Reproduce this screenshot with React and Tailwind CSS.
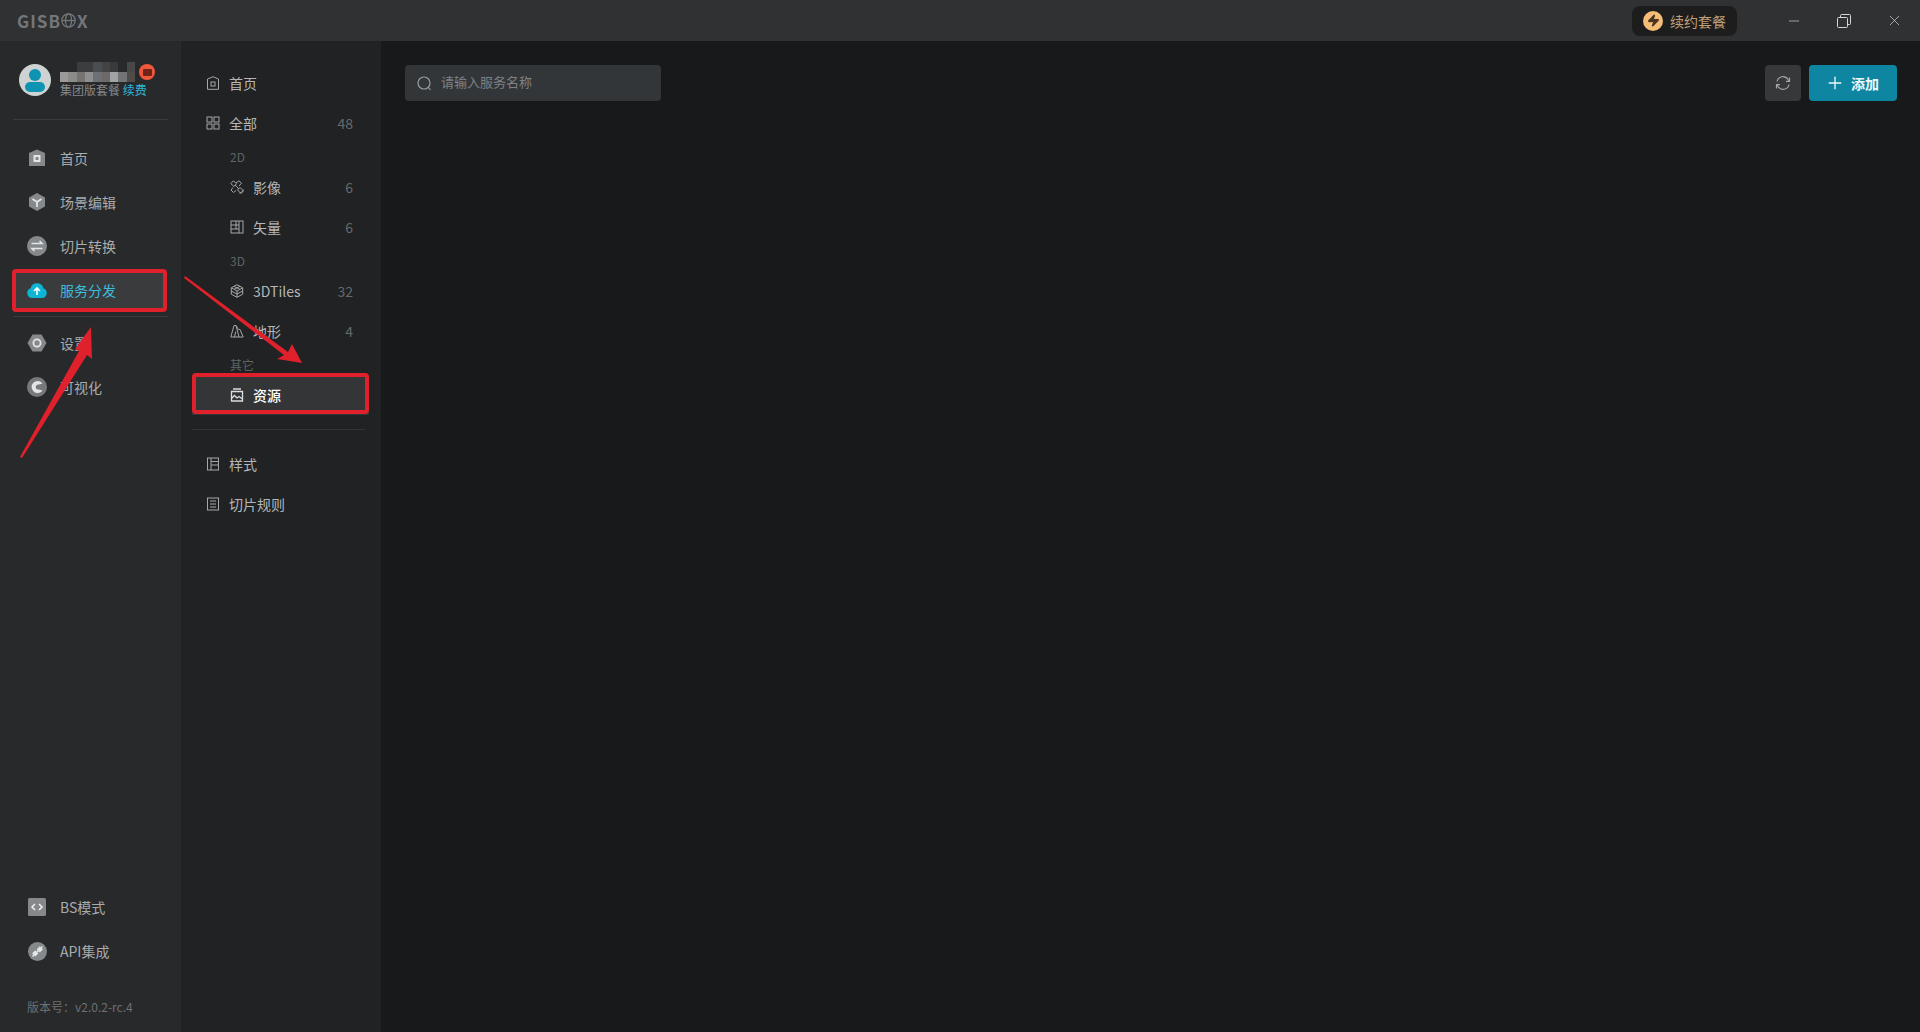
import { Plus, X, Minus, Zap } from "lucide-react";

const FONT = { fontFamily: '"Noto Sans CJK SC", "Noto Sans", sans-serif' };

// 左侧主导航图标
function IconHome() {
  return (
    <svg width="18" height="18" viewBox="0 0 18 18">
      <path d="M9 0.5 L17 4 V17 H1 V4 Z" fill="#85898b" />
      <rect x="5.5" y="6" width="7" height="7" fill="#e4e5e6" />
      <rect x="7.5" y="8" width="3" height="3" fill="#85898b" />
    </svg>
  );
}

function IconScene() {
  return (
    <svg width="18" height="18" viewBox="0 0 18 18">
      <path d="M9 0 L17 4.5 V13.5 L9 18 L1 13.5 V4.5 Z" fill="#85898b" />
      <path d="M4.5 6 L9 9 L13.5 6 M9 9 V14" stroke="#e4e5e6" strokeWidth="1.8" fill="none" />
    </svg>
  );
}

function IconSwitch() {
  return (
    <svg width="20" height="20" viewBox="0 0 20 20">
      <circle cx="10" cy="10" r="10" fill="#85898b" />
      <path d="M4.5 7.5 H15 L12.5 5 M15.5 12.5 H5 L7.5 15" stroke="#e4e5e6" strokeWidth="1.6" fill="none" />
    </svg>
  );
}

function IconCloud() {
  return (
    <svg width="20" height="18" viewBox="0 0 20 18">
      <path d="M5 17 A5 5 0 0 1 3.6 7.3 A6.6 6.6 0 0 1 16.4 7.3 A5 5 0 0 1 15 17 Z" fill="#0db4d4" />
      <path d="M10 14 V7.5 M7 10 L10 7 L13 10" stroke="#fff" strokeWidth="1.6" fill="none" />
    </svg>
  );
}

function IconGear() {
  return (
    <svg width="20" height="18" viewBox="0 0 20 18">
      <path d="M5.5 0.5 H14.5 L19.5 9 L14.5 17.5 H5.5 L0.5 9 Z" fill="#85898b" />
      <circle cx="10" cy="9" r="3.6" fill="none" stroke="#e4e5e6" strokeWidth="1.8" />
    </svg>
  );
}

function IconVisual() {
  return (
    <svg width="20" height="20" viewBox="0 0 20 20">
      <circle cx="10" cy="10" r="10" fill="#77797b" />
      <path d="M15.5 6.5 A6 6 0 1 0 15.5 13.5 L12 12.5 A2.6 2.6 0 1 1 12 7.5 Z" fill="#e4e5e6" />
    </svg>
  );
}

function IconCode() {
  return (
    <svg width="18" height="18" viewBox="0 0 18 18">
      <rect width="18" height="18" rx="1.5" fill="#85898b" />
      <path d="M7 6 L4 9 L7 12 M11 6 L14 9 L11 12" stroke="#f0f0f0" strokeWidth="1.5" fill="none" />
    </svg>
  );
}

function IconApi() {
  return (
    <svg width="19" height="19" viewBox="0 0 19 19">
      <circle cx="9.5" cy="9.5" r="9.5" fill="#85898b" />
      <path d="M4.5 14.5 L14.5 4.5" stroke="#e4e5e6" strokeWidth="1.5" />
      <rect x="5" y="9.2" width="4.4" height="4.4" transform="rotate(45 7.2 11.4)" fill="#e4e5e6" />
      <rect x="9.6" y="5.2" width="4.4" height="4.4" transform="rotate(45 11.8 7.4)" fill="#e4e5e6" />
    </svg>
  );
}

// 二级导航线框图标
function Line({ children }) {
  return (
    <svg width="14" height="14" viewBox="0 0 14 14" fill="none" stroke="currentColor" strokeWidth="1" className="shrink-0">
      {children}
    </svg>
  );
}

const subIcons = {
  home: (
    <Line>
      <path d="M7 0.7 L12.5 3 V13.3 H1.5 V3 Z" />
      <rect x="5" y="6" width="4" height="4" />
    </Line>
  ),
  grid: (
    <Line>
      <rect x="1" y="1" width="5" height="5" />
      <rect x="8" y="1" width="5" height="5" />
      <rect x="1" y="8" width="5" height="5" />
      <rect x="8" y="8" width="5" height="5" />
    </Line>
  ),
  satellite: (
    <Line>
      <path d="M5 5 L9 9 M3.5 0.8 L0.8 3.5 L3.8 6.5 L6.5 3.8 Z M10 7.5 L7.5 10 L10.5 13 L13 10.5 Z M6 3 L9 0.8 L11.5 3.2 L9 6 M3 7.5 L1 10 L3.5 12.5 L6 10.5 M9.5 13.2 C12 13.4 13.4 12 13.2 9.5" />
    </Line>
  ),
  vector: (
    <Line>
      <rect x="1" y="1" width="12" height="12" />
      <path d="M1 5 H9 M6 1 V9 M9 1 V13 M1 9 H9" />
    </Line>
  ),
  cube: (
    <Line>
      <path d="M7 0.7 L12.7 3.8 V10.2 L7 13.3 L1.3 10.2 V3.8 Z M1.3 3.8 L7 7 L12.7 3.8 M7 7 V13.3 M4 2.3 L10 5.4 M10 2.3 L4 5.4 M1.3 7 L7 10 L12.7 7" />
    </Line>
  ),
  terrain: (
    <Line>
      <path d="M0.8 13 L4 1.5 H6 L9 13 M6 1.5 L8.5 5.5 H10 L13.2 13 H0.8 M4.5 13 L5.8 7.5" />
    </Line>
  ),
  asset: (
    <Line>
      <path d="M3 1 H11 M1.5 3.5 H12.5 V13 H1.5 Z M1.5 10.5 L4.5 7.5 L7 10 L9 8.5 L12.5 11" strokeWidth="1.3" />
    </Line>
  ),
  style: (
    <Line>
      <rect x="1.5" y="1" width="11" height="12" />
      <path d="M5 1 V13 M5 4.5 H12.5 M5 8 H12.5" />
    </Line>
  ),
  rule: (
    <Line>
      <rect x="1.5" y="1" width="11" height="12" />
      <path d="M4 4 H10 M4 7 H10 M4 10 H10" />
    </Line>
  ),
};

function NavItem({ icon, label, active }) {
  return (
    <div className={`relative flex items-center h-11 pl-[25px] text-sm ${active ? "text-[#3fbcdc]" : "text-[#a9acae]"}`}>
      <span className="w-6 flex items-center justify-center">{icon}</span>
      <span className="ml-[11px]">{label}</span>
    </div>
  );
}

function SubRow({ icon, label, count, nested, active }) {
  return (
    <div
      className={`relative flex items-center h-10 pr-[16px] text-sm ${nested ? "pl-[38px]" : "pl-[14px]"} ${
        active ? "bg-[#333537] text-white font-medium" : "text-[#b4b7b9]"
      }`}
    >
      <span className={active ? "text-[#dcdddd]" : "text-[#a5a8aa]"}>{subIcons[icon]}</span>
      <span className="ml-[9px]">{label}</span>
      {count !== undefined && <span className="ml-auto text-[#66696b]">{count}</span>}
      {active && <span className="absolute left-0 right-0 top-[-2px] bottom-[1px] border-4 border-[#e0202b] rounded-sm" />}
    </div>
  );
}

function GroupLabel({ children }) {
  return <div className="h-6 pt-[3px] pl-[38px] text-xs leading-[22px] text-[#606365]">{children}</div>;
}

// 用户名打码
const mosaic = [
  ["bg-transparent", "bg-transparent", "bg-[#3c3d3f]", "bg-[#3c3d3f]", "bg-[#4a4e53]", "bg-[#454444]", "bg-[#3a3a3a]", "bg-transparent", "bg-[#484848]"],
  ["bg-[#9a9a9a]", "bg-[#8b8b89]", "bg-[#757472]", "bg-[#8d8f90]", "bg-[#6d7074]", "bg-[#6b6a68]", "bg-[#a1a3a5]", "bg-[#727475]", "bg-[#4f4c49]"],
];

export default function App() {
  return (
    <div className="relative w-full h-[1032px] flex flex-col overflow-hidden bg-[#18191b]" style={FONT}>
      <header className="h-[41px] shrink-0 flex items-center bg-[#2f3133] pl-[17px]">
        <div className="flex items-center text-[17px] font-bold tracking-[1px] text-[#73767a]">
          <span>GISB</span>
          <svg width="15" height="15" viewBox="0 0 14 14" fill="none" stroke="currentColor" strokeWidth="1.2">
            <circle cx="7" cy="7" r="6.2" />
            <ellipse cx="7" cy="7" rx="2.8" ry="6.2" />
            <path d="M1 7 H13" />
          </svg>
          <span className="ml-[1px]">X</span>
        </div>
        <div className="ml-auto flex items-center h-[30px] w-[105px] rounded-lg bg-[#1d1d1e] pl-[11px]">
          <span className="flex items-center justify-center w-5 h-5 rounded-full bg-[#f5bd78]">
            <Zap size={13} fill="#4a3320" stroke="#4a3320" />
          </span>
          <span className="ml-[7px] text-sm text-[#c09f78]">续约套餐</span>
        </div>
        <div className="flex items-center text-[#d5d6d7] ml-[32px] pr-[1px]">
          <span className="w-[50px] flex justify-center"><Minus size={16} strokeWidth={1} /></span>
          <span className="w-[50px] flex justify-center">
            <svg width="14" height="14" viewBox="0 0 14 14" fill="none" stroke="currentColor" strokeWidth="1">
              <rect x="0.5" y="3.5" width="10" height="10" rx="1" />
              <path d="M3.5 3.5 V1.5 A1 1 0 0 1 4.5 0.5 H12.5 A1 1 0 0 1 13.5 1.5 V9.5 A1 1 0 0 1 12.5 10.5 H10.5" />
            </svg>
          </span>
          <span className="w-[50px] flex justify-center"><X size={17} strokeWidth={1} /></span>
        </div>
      </header>

      <div className="flex flex-1 min-h-0">
        <aside className="w-[181px] shrink-0 flex flex-col bg-[#28292b]">
          <div className="h-[79px] mx-[13px] flex items-center border-b border-[#3b3c3e] pl-[6px]">
            <div className="relative w-8 h-8 rounded-full bg-[#ced2d3] overflow-hidden shrink-0">
              <span className="absolute left-[10px] top-[5px] w-3 h-3 rounded-full bg-[#0f93b2]" />
              <span className="absolute left-[6px] top-[18px] w-5 h-[10px] rounded-full bg-[#0f93b2]" />
            </div>
            <div className="ml-[9px] min-w-0">
              <div className="flex items-center">
                <div className="grid grid-cols-9 w-[75px]">
                  {mosaic.flat().map((c, i) => (
                    <span key={i} className={`h-[10px] ${c}`} />
                  ))}
                </div>
                <span className="ml-[4px] w-4 h-4 rounded-full bg-[#f0583c] flex items-center justify-center">
                  <span className="w-[9px] h-[7px] bg-[#6e2418] rounded-[1px]" />
                </span>
              </div>
              <div className="text-xs leading-4 text-[#85888a] whitespace-nowrap">
                集团版套餐 <span className="text-[#2fb3d6]">续费</span>
              </div>
            </div>
          </div>

          <div className="mt-[16px]">
            <NavItem icon={<IconHome />} label="首页" />
            <NavItem icon={<IconScene />} label="场景编辑" />
            <NavItem icon={<IconSwitch />} label="切片转换" />
            <div className="relative">
              <span className="absolute left-3 w-[155px] top-[1px] h-[43px] border-4 border-[#e0202b] bg-[#393b3d] rounded-sm" />
              <NavItem icon={<IconCloud />} label="服务分发" active />
            </div>
            <div className="mx-[13px] mt-[4px] mb-[4px] border-t border-[#3b3c3e]" />
            <NavItem icon={<IconGear />} label="设置" />
            <NavItem icon={<IconVisual />} label="可视化" />
          </div>

          <div className="mt-auto">
            <NavItem icon={<IconCode />} label="BS模式" />
            <NavItem icon={<IconApi />} label="API集成" />
            <div className="mt-[26px] mb-[17px] pl-[27px] text-xs leading-4 text-[#6d7072]">版本号：v2.0.2-rc.4</div>
          </div>
        </aside>

        <nav className="w-[200px] shrink-0 bg-[#202223]">
          <div className="mt-[22px] ml-[11px] mr-[12px]">
            <SubRow icon="home" label="首页" />
            <SubRow icon="grid" label="全部" count={48} />
            <GroupLabel>2D</GroupLabel>
            <SubRow icon="satellite" label="影像" count={6} nested />
            <SubRow icon="vector" label="矢量" count={6} nested />
            <GroupLabel>3D</GroupLabel>
            <SubRow icon="cube" label="3DTiles" count={32} nested />
            <SubRow icon="terrain" label="地形" count={4} nested />
            <GroupLabel>其它</GroupLabel>
            <SubRow icon="asset" label="资源" nested active />
            <div className="my-[14px] mr-1 border-t border-[#333537]" />
            <SubRow icon="style" label="样式" />
            <SubRow icon="rule" label="切片规则" />
          </div>
        </nav>

        <main className="flex-1 flex items-start pt-[24px] pl-6 pr-[23px]">
          <div className="flex items-center w-[256px] h-9 rounded bg-[#333639] pl-3">
            <svg width="15" height="15" viewBox="0 0 15 15" fill="none" stroke="#999c9e" strokeWidth="1.2">
              <circle cx="7" cy="7" r="6" />
              <path d="M11.5 11.5 L13.5 14" />
            </svg>
            <span className="ml-[9px] mb-[2px] text-[13px] text-[#7f8285]">请输入服务名称</span>
          </div>
          <button className="ml-auto w-9 h-9 rounded bg-[#36383a] flex items-center justify-center">
            <svg width="16" height="16" viewBox="0 0 16 16" fill="none" stroke="#a5a8aa" strokeWidth="1.2">
              <path d="M2 6.5 A6 6 0 0 1 13 4.5 L14 6 M14 9.5 A6 6 0 0 1 3 11.5 L2 10" />
              <path d="M14.5 2.5 V6.3 H11 M1.5 13.5 V9.7 H5" />
            </svg>
          </button>
          <button className="ml-2 w-[88px] h-9 rounded bg-[#0f86a1] flex items-center justify-center pr-[2px] text-[#eef7f9] text-sm font-bold">
            <Plus size={20} strokeWidth={1.6} />
            <span className="ml-[6px]">添加</span>
          </button>
        </main>
      </div>

      {/* 截图上的红色标注箭头 */}
      <svg className="absolute inset-0 pointer-events-none" width="1920" height="1032" fill="#e0202b">
        <path d="M20 457 L79 351 L75 349 L91 327 L92 359 L87 355 L22 458 Z" />
        <path d="M185 276 L288 352 L292 344 L302 363 L277 359 L284 355 L184 278 Z" />
      </svg>
    </div>
  );
}
